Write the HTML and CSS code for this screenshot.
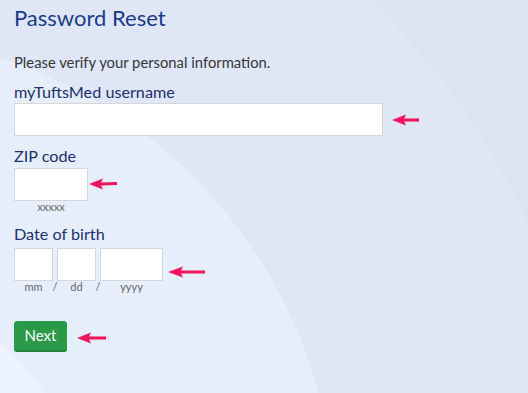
FILE: index.html
```html
<!DOCTYPE html>
<html>

<head>
    <meta charset="utf-8">
    <title>Password Reset</title>
    <link rel="stylesheet" href="styles.css">
</head>

<body>
    <div id="main_window">
        <h1 class="title">Password Reset</h1>
        <p class="intro">Please verify your personal information.</p>

        <form autocomplete="off">
            <div class="field field-user">
                <label for="username">myTuftsMed username</label>
                <div class="row">
                    <input id="username" class="box box-wide" type="text">
                    <svg class="arrow arrow-user" width="27" height="12" viewBox="0 0 27 12">
                        <polygon points="0,6 14,0.5 12,4.5 27,4.5 27,7.5 12,7.5 14,11.5" />
                    </svg>
                </div>
            </div>

            <div class="field field-zip">
                <label for="zip">ZIP code</label>
                <div class="row">
                    <div class="cell">
                        <input id="zip" class="box box-zip" type="text">
                        <span class="hint">xxxxx</span>
                    </div>
                    <svg class="arrow arrow-zip" width="28" height="12" viewBox="0 0 28 12">
                        <polygon points="0,6 14,0.5 12,4.5 28,4 28,7 12,7.5 14,11.5" />
                    </svg>
                </div>
            </div>

            <div class="field field-dob">
                <label for="mm">Date of birth</label>
                <div class="row">
                    <div class="dob">
                        <input id="mm" class="box box-mm" type="text">
                        <span class="gap"></span>
                        <input id="dd" class="box box-dd" type="text">
                        <span class="gap"></span>
                        <input id="yyyy" class="box box-yyyy" type="text">
                        <span class="hint">mm</span>
                        <span class="hint slash">/</span>
                        <span class="hint">dd</span>
                        <span class="hint slash">/</span>
                        <span class="hint">yyyy</span>
                    </div>
                    <svg class="arrow arrow-dob" width="37" height="12" viewBox="0 0 37 12">
                        <polygon points="0,6 15,0.5 13,4.5 37,4.5 37,7.5 13,7.5 15,11.5" />
                    </svg>
                </div>
            </div>

            <div class="row row-next">
                <button type="button" class="next">Next</button>
                <svg class="arrow arrow-next" width="29" height="12" viewBox="0 0 29 12">
                    <polygon points="0,6 14,0.5 12,4.5 29,4.5 29,7.5 12,7.5 14,11.5" />
                </svg>
            </div>
        </form>
    </div>
</body>

</html>
```
FILE: styles.css
```css
:root {
    --navy: #173a8c;
    --label: #1c2f6f;
    --text: #353535;
    --hint: #666;
    --pink: #f2125a;
    --green: #2b9a47;
    --border: #d4d6da;
}

html,
body {
    height: 100%;
}

body {
    margin: 0;
    font-family: 'Lato', 'Noto Sans', sans-serif;
    color: var(--text);
    background:
        radial-gradient(circle at -150px 520px, #edf3fe 232px, #e7eefb 233px, #e7eefb 485px, rgba(231, 238, 251, 0) 486px),
        radial-gradient(circle at -100px 500px, #dfe7f6 685px, #dde4f0 686px);
    background-attachment: fixed;
    overflow: hidden;
}

#main_window {
    padding: 4px 14px;
}

.title {
    margin: 0;
    font-size: 22px;
    line-height: 28px;
    font-weight: normal;
    color: var(--navy);
}

.intro {
    margin: 20px 0 0;
    font-size: 14.8px;
    line-height: 20px;
}

form {
    margin: 0;
}

.field label {
    display: block;
    font-size: 16.2px;
    line-height: 20px;
    color: var(--label);
}

.field-user {
    margin-top: 10px;
}

.field-user label {
    margin-bottom: 1px;
}

.field-zip {
    margin-top: 10px;
}

.field-zip label {
    margin-bottom: 2px;
}

.field-dob {
    margin-top: 11px;
}

.field-dob label {
    margin-bottom: 4px;
}

.row {
    display: flex;
    align-items: flex-start;
}

.box {
    display: block;
    box-sizing: border-box;
    height: 33px;
    margin: 0;
    padding: 0 6px;
    border: 1px solid var(--border);
    border-radius: 0;
    background: #fff;
    font: inherit;
}

.box-wide {
    width: 369px;
}

.box-zip {
    width: 74px;
}

.cell {
    display: flex;
    flex-direction: column;
    align-items: center;
}

.hint {
    font-size: 11px;
    line-height: 12px;
    color: var(--hint);
    text-align: center;
}

.dob {
    display: grid;
    grid-template-columns: 39px 4px 39px 4px 63px;
}

.box-mm,
.box-dd,
.box-yyyy {
    width: 100%;
}

.slash {
    display: flex;
    justify-content: center;
}

.arrow {
    flex: none;
    fill: var(--pink);
}

.arrow-user {
    margin: 11px 0 0 9px;
}

.arrow-zip {
    margin: 10px 0 0 1px;
}

.arrow-dob {
    margin: 18px 0 0 5px;
}

.row-next {
    align-items: center;
    margin-top: 28px;
}

.next {
    width: 53px;
    height: 31px;
    padding: 0 0 2px;
    border: none;
    border-bottom: 2px solid #22803a;
    border-radius: 3px;
    background: var(--green);
    color: #fff;
    font: inherit;
    font-size: 15px;
}

.arrow-next {
    margin: 2px 0 0 10px;
}
```
